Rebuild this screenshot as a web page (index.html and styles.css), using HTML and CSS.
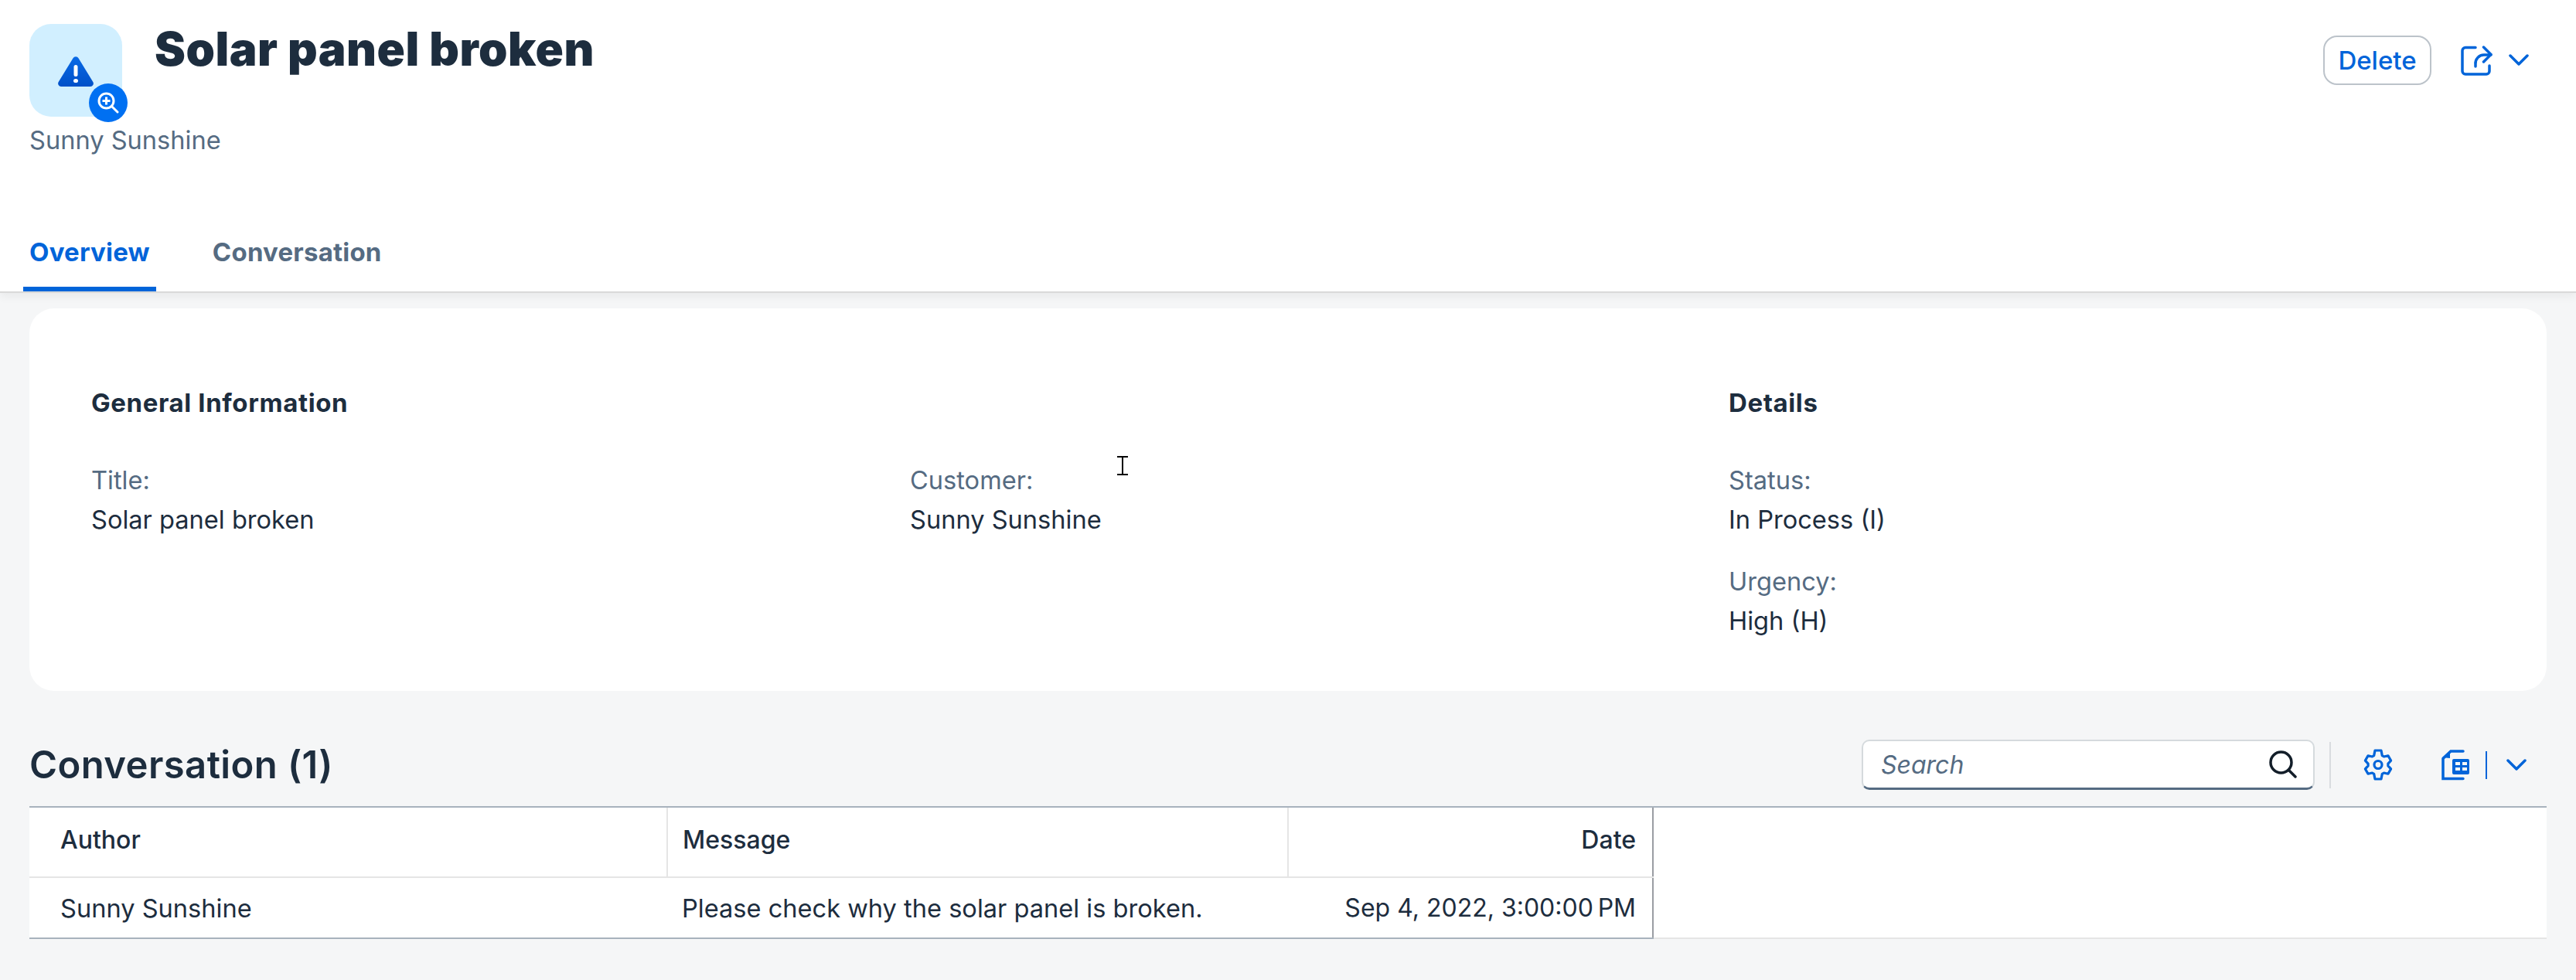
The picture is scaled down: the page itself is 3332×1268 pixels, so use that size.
FILE: index.html
```html
<!DOCTYPE html>
<html lang="en">
<head>
  <meta charset="UTF-8">
  <title>Solar panel broken</title>
  <link rel="stylesheet" href="styles.css">
</head>
<body>
  <header class="header">
    <div class="title-row">
      <div class="avatar">
        <svg class="warn-icon" viewBox="0 0 46 39">
          <defs>
            <linearGradient id="warnFill" x1="0" y1="0" x2="0" y2="1">
              <stop offset="0" stop-color="#0a6ae6"/>
              <stop offset="1" stop-color="#0050c8"/>
            </linearGradient>
          </defs>
          <path d="M19.5 2.2a4 4 0 0 1 7 0L45.3 33a4 4 0 0 1-3.4 6H4.100a4 4 0 0 1-3.400-6z" fill="url(#warnFill)"/>
          <rect x="20.500" y="11" width="5" height="15" rx="2.500" fill="#fff"/>
          <ellipse cx="23" cy="31.500" rx="3" ry="2.600" fill="#fff"/>
        </svg>
        <span class="avatar-badge">
          <svg viewBox="0 0 28 28">
            <circle cx="11.500" cy="11.500" r="9.500" fill="none" stroke="#fff" stroke-width="3"/>
            <path d="M6.500 11.500h10M11.500 6.500v10" stroke="#fff" stroke-width="3"/>
            <path d="M18.500 18.500l7.500 7.500" stroke="#fff" stroke-width="3" stroke-linecap="round"/>
          </svg>
        </span>
      </div>
      <h1 class="page-title">Solar panel broken</h1>
      <div class="header-actions">
        <button class="btn-delete">Delete</button>
        <svg class="share-icon" viewBox="0 0 41 39" fill="none" stroke="#0064d9" stroke-width="3.500" stroke-linecap="round" stroke-linejoin="round">
          <path d="M19 2.500H6a4 4 0 0 0-4 4V33a4 4 0 0 0 4 4h27a4 4 0 0 0 4-4v-7"/>
          <path d="M19 27v-3a11 11 0 0 1 11-12h9"/>
          <path d="M29.500 2l9.500 9.500-9.500 9.500"/>
        </svg>
        <svg class="chevron chevron-share" viewBox="0 0 26 16" fill="none" stroke="#0064d9" stroke-width="3.500" stroke-linecap="round" stroke-linejoin="round">
          <path d="M2 2l11 11L24 2"/>
        </svg>
      </div>
    </div>
    <div class="subtitle">Sunny Sunshine</div>
    <nav class="tabs">
      <a class="tab tab-active">Overview</a>
      <a class="tab">Conversation</a>
    </nav>
  </header>

  <section class="card">
    <div class="card-group card-group-wide">
      <h3 class="group-title">General Information</h3>
      <div class="field-cols">
        <div class="field">
          <div class="field-label">Title:</div>
          <div class="field-value">Solar panel broken</div>
        </div>
        <div class="field">
          <div class="field-label">Customer:</div>
          <div class="field-value">Sunny Sunshine</div>
        </div>
      </div>
    </div>
    <div class="card-group">
      <h3 class="group-title">Details</h3>
      <div class="field">
        <div class="field-label">Status:</div>
        <div class="field-value">In Process (I)</div>
      </div>
      <div class="field">
        <div class="field-label">Urgency:</div>
        <div class="field-value">High (H)</div>
      </div>
    </div>
  </section>

  <section class="conversation">
    <div class="toolbar">
      <h2 class="toolbar-title">Conversation (1)</h2>
      <div class="search">
        <span class="search-text">Search</span>
        <svg class="search-icon" viewBox="0 0 36 36" fill="none" stroke="#131e29" stroke-width="3.500" stroke-linecap="round">
          <circle cx="15.500" cy="15.500" r="13.500"/>
          <path d="M25.500 25.500L34 34"/>
        </svg>
      </div>
      <span class="toolbar-sep"></span>
      <svg class="gear-icon" viewBox="0 0 38 41" fill="none" stroke="#0064d9" stroke-width="3.200" stroke-linejoin="round">
        <path d="M13.700 8.600L15 2h8l1.300 6.600 2.300 1.400L32 8.800l3.600 6.300-3.700 4v2.800l3.700 4-3.600 6.300-5.400-1.200-2.300 1.400L23 39h-8l-1.300-6.600-2.300-1.400L6 32.200l-3.600-6.300 3.700-4v-2.800l-3.700-4L6 8.800l5.400 1.200z"/>
        <circle cx="19" cy="20.500" r="5"/>
      </svg>
      <svg class="export-icon" viewBox="0 0 37 41">
        <path d="M29 3H13L3 12.500V38.500h26" fill="none" stroke="#0064d9" stroke-width="3.500" stroke-linecap="round"/>
        <path d="M2 11L12 2v10z" fill="#0064d9"/>
        <path d="M17 13h18a2 2 0 0 1 2 2v16a2 2 0 0 1-2 2H17a2 2 0 0 1-2-2V15a2 2 0 0 1 2-2zM19 17v4h6v-4zm9 0v4h6v-4zm-9 7v4h6v-4zm9 0v4h6v-4z" fill="#0064d9" fill-rule="evenodd"/>
      </svg>
      <span class="export-sep"></span>
      <svg class="chevron chevron-export" viewBox="0 0 26 16" fill="none" stroke="#0064d9" stroke-width="3.500" stroke-linecap="round" stroke-linejoin="round">
        <path d="M2 2l11 11L24 2"/>
      </svg>
    </div>

    <div class="table-wrap">
      <table class="conv-table">
        <thead>
          <tr>
            <th class="col-author">Author</th>
            <th class="col-message">Message</th>
            <th class="col-date">Date</th>
          </tr>
        </thead>
        <tbody>
          <tr>
            <td>Sunny Sunshine</td>
            <td>Please check why the solar panel is broken.</td>
            <td class="cell-date">Sep 4, 2022, 3:00:00&#8239;PM</td>
          </tr>
        </tbody>
      </table>
    </div>
  </section>

  <!-- mouse pointer caught in the screenshot -->
  <svg class="text-cursor" viewBox="0 0 14 25" fill="none" stroke="#000" stroke-width="2">
    <path d="M0 1h14M0 24h14M7 1v23"/>
  </svg>
</body>
</html>
```

FILE: styles.css
```css
* {
  box-sizing: border-box;
}
html, body {
  height: 100%;
}
body {
  margin: 0;
  background: #f5f6f7;
  color: #1d2d3e;
  font-family: Inter, "Noto Sans", sans-serif;
  font-size: 32.600px;
  overflow: hidden;
  position: relative;
}

/* object page header */
.header {
  height: 379px;
  background: #fff;
  padding: 31px 38px 0;
  display: flex;
  flex-direction: column;
  border-bottom: 2px solid #d9d9d9;
  box-shadow: 0 4px 12px rgba(0, 0, 0, 0.06);
}
.title-row {
  display: flex;
  align-items: flex-start;
}
.avatar {
  width: 120px;
  height: 120px;
  flex: none;
  background: #d1efff;
  border-radius: 28px;
  position: relative;
  display: flex;
  align-items: center;
  justify-content: center;
}
.warn-icon {
  width: 46px;
  height: 39px;
  margin-top: 2px;
}
.avatar-badge {
  position: absolute;
  right: -7px;
  bottom: -7px;
  width: 50px;
  height: 50px;
  border-radius: 50%;
  background: #0070f2;
  display: flex;
  align-items: center;
  justify-content: center;
}
.avatar-badge svg {
  width: 28px;
  height: 28px;
}
.page-title {
  margin: 0 0 0 42px;
  font-size: 60px;
  font-weight: 900;
  letter-spacing: 0.500px;
  line-height: 64px;
}
.header-actions {
  margin-left: auto;
  margin-right: 23px;
  margin-top: 15px;
  display: flex;
  align-items: center;
}
.btn-delete {
  width: 140px;
  height: 64px;
  padding: 0;
  background: #fff;
  border: 2px solid #bcc3ca;
  border-radius: 18px;
  color: #0064d9;
  font-family: inherit;
  font-size: 33px;
  font-weight: 500;
}
.share-icon {
  width: 41px;
  height: 39px;
  margin-left: 38px;
}
.chevron {
  width: 26px;
  height: 16px;
}
.chevron-share {
  margin-left: 21px;
}
.subtitle {
  margin-top: 8px;
  color: #556b82;
  line-height: 44px;
}
.tabs {
  margin-top: auto;
  display: flex;
  margin-left: -8px;
}
.tab {
  padding: 0 8px;
  height: 90px;
  line-height: 78px;
  margin-right: 65px;
  font-size: 33px;
  font-weight: 700;
  letter-spacing: 0.200px;
  color: #556b82;
  border-bottom: 6px solid transparent;
}
.tab-active {
  color: #0064d9;
  border-bottom-color: #0064d9;
}

/* general information card */
.card {
  margin: 20px 38px 0;
  height: 495px;
  background: #fff;
  border-radius: 32px;
  padding: 100px 0 0 80px;
  display: grid;
  grid-template-columns: 2118px 1fr;
}
.group-title {
  margin: 0 0 56px;
  font-size: 33px;
  font-weight: 700;
  letter-spacing: 0.600px;
  line-height: 44px;
}
.field-cols {
  display: grid;
  grid-template-columns: 1059px 1059px;
}
.field {
  margin-bottom: 36px;
}
.field-label {
  color: #556b82;
  line-height: 44px;
}
.field-value {
  line-height: 44px;
  margin-top: 7px;
}

/* conversation table */
.conversation {
  margin: 0 38px;
}
.toolbar {
  height: 149px;
  display: flex;
  align-items: center;
  padding-top: 42px;
}
.toolbar-title {
  margin: 0;
  margin-right: auto;
  font-size: 49px;
  font-weight: 600;
  letter-spacing: 0.400px;
  line-height: 60px;
}
.search {
  width: 586px;
  height: 65px;
  background: #fff;
  border: 2px solid #d5dadd;
  border-bottom: 3px solid #556b82;
  border-radius: 10px;
  display: flex;
  align-items: center;
  justify-content: space-between;
  padding: 0 21px 0 23px;
}
.search-text {
  color: #556b82;
  font-size: 32px;
  font-style: italic;
}
.search-icon {
  width: 36px;
  height: 36px;
}
.toolbar-sep {
  width: 2px;
  height: 60px;
  background: #d9dcdf;
  margin-left: 19px;
}
.gear-icon {
  width: 38px;
  height: 41px;
  margin-left: 42px;
}
.export-icon {
  width: 37px;
  height: 41px;
  margin-left: 62px;
}
.export-sep {
  width: 2px;
  height: 36px;
  background: #0064d9;
  margin-left: 21px;
}
.chevron-export {
  margin-left: 25px;
  margin-right: 26px;
}
.table-wrap {
  background: #fff;
  border-top: 2px solid #a8b2bd;
  border-bottom: 2px solid #e5e5e5;
  height: 172px;
}
.conv-table {
  width: 2101px;
  height: 170px;
  table-layout: fixed;
  border-collapse: collapse;
  border-right: 2px solid #9a9da3;
  border-bottom: 2px solid #a8b2bd;
}
.conv-table th, .conv-table td {
  padding: 0 21px 0 40px;
  text-align: left;
  line-height: 44px;
  white-space: nowrap;
}
.conv-table th {
  height: 90px;
  font-size: 32px;
  font-weight: 500;
  padding-bottom: 6px;
  border-bottom: 2px solid #e5e5e5;
  border-right: 2px solid #e5e5e5;
}
.conv-table th.col-author {
  width: 825px;
}
.conv-table th.col-message {
  width: 803px;
  padding-left: 19px;
}
.conv-table th.col-date {
  text-align: right;
  border-right: none;
}
.conv-table td + td {
  padding-left: 19px;
}
.conv-table td.cell-date {
  text-align: right;
  font-size: 32px;
  padding-left: 0;
  padding-right: 21px;
}

.text-cursor {
  position: absolute;
  left: 1445px;
  top: 590px;
  width: 14px;
  height: 25px;
}
```
